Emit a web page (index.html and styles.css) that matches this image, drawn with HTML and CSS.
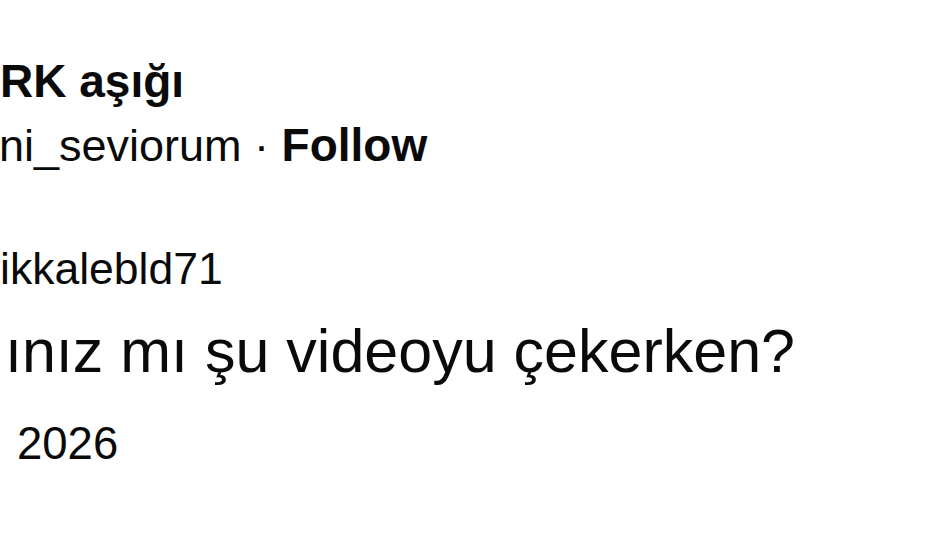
FILE: index.html
```html
<!DOCTYPE html>
<html lang="tr">
<head>
    <meta charset="UTF-8">
    <meta name="viewport" content="width=device-width, initial-scale=1.0">
    <title>Post</title>
    <link rel="stylesheet" href="styles.css">
</head>
<body>
    <!-- Post card, shown zoomed in so the left side runs off the edge -->
    <article class="post">
        <header class="post-head">
            <div class="author-name">RK aşığı</div>
            <div class="author-meta">ni_seviorum · <span class="follow">Follow</span></div>
        </header>

        <div class="reply-to">ikkalebld71</div>
        <p class="post-text">ınız mı şu videoyu çekerken?</p>
        <div class="post-date">2026</div>
    </article>
</body>
</html>
```

FILE: styles.css
```css
body, html {
    margin: 0;
    padding: 0;
    width: 100%;
    height: 100%;
    overflow: hidden;
    background-color: #ffffff;
    color: #0a0a0a;
    font-family: "Liberation Sans", Arial, sans-serif;
}

.post {
    display: flex;
    flex-direction: column;
    padding-top: 58px;
    overflow: hidden;
}

.post-head {
    display: flex;
    flex-direction: column;
    gap: 18px;
}

.author-name {
    font-size: 46px;
    line-height: 46px;
    font-weight: 700;
    white-space: nowrap;
}

.author-meta {
    font-size: 45px;
    line-height: 46px;
    white-space: nowrap;
    margin-left: -1px;
}

.follow {
    font-weight: 700;
    font-size: 46px;
}

/* "Replying to" handle */
.reply-to {
    margin-top: 78px;
    font-size: 44.5px;
    line-height: 44px;
    white-space: nowrap;
}

.post-text {
    margin: 30px 0 0;
    padding-left: 5px;
    font-size: 61px;
    line-height: 61px;
    white-space: nowrap;
}

.post-date {
    margin-top: 39px;
    padding-left: 17px;
    font-size: 45.5px;
    line-height: 45px;
}
```
